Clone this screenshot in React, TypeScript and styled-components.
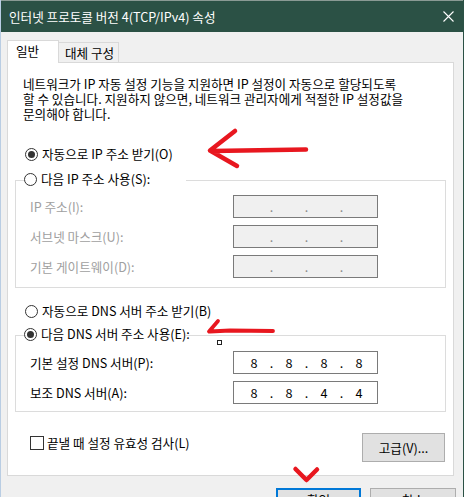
import React from 'react'
import styled, { createGlobalStyle } from 'styled-components'

const GlobalStyle = createGlobalStyle`
    html, body {
        margin: 0;
        padding: 0;
        background: #ffffff;
    }
    body {
        font-family: 'Noto Sans CJK KR', 'Noto Sans', sans-serif;
        font-size: 12.6px;
        color: #000000;
    }
`

// Styled Components
const Window = styled.div`
    position: relative;
    width: 464px;
    height: 497px;
    box-sizing: border-box;
    overflow: hidden;
    background: #f0f0f0;
    border-left: 1px solid #b9cde3;
    border-right: 1px solid #2b5145;
    display: flex;
    flex-direction: column;
`

const TitleBar = styled.div`
    height: 32px;
    flex: none;
    box-sizing: border-box;
    border-top: 1px solid #8a9a94;
    background: #2b5145;
    color: #ffffff;
    display: flex;
    align-items: center;
    justify-content: space-between;
    padding: 0 9px 0 8px;
    line-height: 16px;
`

const Body = styled.div`
    padding: 8px 7px 0 6px;
    display: flex;
    flex-direction: column;
`

const TabBar = styled.div`
    display: flex;
    align-items: flex-end;
    height: 22px;
`

const Tab = styled.div<{ $active?: boolean }>`
    position: relative;
    z-index: ${(p) => (p.$active ? 2 : 1)};
    box-sizing: border-box;
    height: ${(p) => (p.$active ? '23px' : '20px')};
    margin-bottom: ${(p) => (p.$active ? '-1px' : '0')};
    margin-left: ${(p) => (p.$active ? '0' : '-1px')};
    width: ${(p) => (p.$active ? '52px' : '61px')};
    padding-left: ${(p) => (p.$active ? '8px' : '6px')};
    background: ${(p) => (p.$active ? '#ffffff' : '#f0f0f0')};
    border: 1px solid #d9d9d9;
    border-bottom: none;
    line-height: ${(p) => (p.$active ? '20px' : '19px')};
    white-space: nowrap;
`

const Panel = styled.div`
    position: relative;
    z-index: 1;
    box-sizing: border-box;
    width: 447px;
    height: 414px;
    background: #ffffff;
    border: 1px solid #d9d9d9;
    display: flex;
    flex-direction: column;
`

const Description = styled.p`
    margin: 13px 0 0 15px;
    line-height: 15px;
    white-space: nowrap;
`

const RadioRow = styled.label<{ $top?: number; $legend?: boolean }>`
    display: flex;
    align-items: center;
    gap: 4px;
    height: 20px;
    margin-top: ${(p) => p.$top ?? 0}px;
    margin-left: ${(p) => (p.$legend ? '8px' : '17px')};
    padding-right: ${(p) => (p.$legend ? '1px' : '0')};
    width: ${(p) => (p.$legend ? '161px' : 'auto')};
    background: #ffffff;
    white-space: nowrap;
    line-height: 16px;
`

const RadioCircle = styled.span<{ $checked?: boolean }>`
    position: relative;
    flex: none;
    width: 13px;
    height: 13px;
    box-sizing: border-box;
    border: 1px solid #333333;
    border-radius: 50%;
    background: #ffffff;

    &::after {
        content: '';
        display: ${(p) => (p.$checked ? 'block' : 'none')};
        position: absolute;
        left: 2px;
        top: 2px;
        width: 7px;
        height: 7px;
        border-radius: 50%;
        background: #333333;
    }
`

const GroupBox = styled.div<{ $top: number; $fieldTop: number; $bottom: number }>`
    box-sizing: border-box;
    width: 431px;
    margin: ${(p) => p.$top}px 0 0 7px;
    border: 1px solid #dcdcdc;
    padding-bottom: ${(p) => p.$bottom}px;

    & > ${RadioRow} {
        margin-top: -12px;
    }

    & > div:first-of-type {
        margin-top: ${(p) => p.$fieldTop}px;
    }
`

const FieldGrid = styled.div`
    display: grid;
    grid-template-columns: 1fr 145px;
    row-gap: 7px;
    align-items: center;
    padding: 0 67px 0 14px;
`

const FieldLabel = styled.span<{ $disabled?: boolean }>`
    color: ${(p) => (p.$disabled ? '#a0a0a0' : '#000000')};
    white-space: nowrap;
    line-height: 16px;
`

const IpBox = styled.div<{ $disabled?: boolean }>`
    box-sizing: border-box;
    height: 23px;
    display: flex;
    align-items: center;
    padding-left: 5px;
    background: ${(p) => (p.$disabled ? '#f0f0f0' : '#ffffff')};
    border: 1px solid #7a7a7a;
    color: ${(p) => (p.$disabled ? '#8a8a8a' : '#000000')};
    line-height: 16px;
`

const Octet = styled.span`
    width: 30px;
    text-align: center;
`

const Dot = styled.span`
    width: 5px;
    text-align: center;
`

const Footer = styled.div`
    display: flex;
    justify-content: space-between;
    align-items: flex-start;
    margin-top: 21px;
    padding: 0 8px 0 22px;
`

const CheckRow = styled.label`
    display: flex;
    align-items: center;
    gap: 3px;
    margin-top: 3px;
    height: 14px;
    white-space: nowrap;
    line-height: 16px;
`

const CheckBox = styled.span`
    width: 14px;
    height: 14px;
    box-sizing: border-box;
    border: 1px solid #333333;
    background: #ffffff;
`

const Button = styled.div<{ $w: number; $h: number; $default?: boolean }>`
    box-sizing: border-box;
    width: ${(p) => p.$w}px;
    height: ${(p) => p.$h}px;
    flex: none;
    display: flex;
    align-items: center;
    justify-content: center;
    background: #e1e1e1;
    border: ${(p) => (p.$default ? '2px solid #0078d7' : '1px solid #adadad')};
    white-space: nowrap;
    line-height: 16px;
`

const DialogButtons = styled.div`
    display: flex;
    justify-content: flex-end;
    gap: 9px;
    margin-top: 12px;
`

const CursorMark = styled.span`
    position: absolute;
    left: 216px;
    top: 340px;
    width: 5px;
    height: 5px;
    box-sizing: border-box;
    border: 1px solid #222222;
    background: #ffffff;
    z-index: 5;
`

const Overlay = styled.svg`
    position: absolute;
    left: -1px;
    top: 0;
    width: 466px;
    height: 497px;
    pointer-events: none;
    z-index: 10;
`

// SVG Icons
const CloseIcon = () => (
    <svg width="11" height="11" viewBox="0 0 11 11">
        <path d="M0.5 0.5 L10.5 10.5 M10.5 0.5 L0.5 10.5" stroke="#ffffff" strokeWidth="1.1" />
    </svg>
)

const IpField = ({ value, disabled }: { value?: string[]; disabled?: boolean }) => {
    const parts = value ?? ['', '', '', '']
    return (
        <IpBox $disabled={disabled}>
            {parts.map((p, i) => (
                <React.Fragment key={i}>
                    <Octet>{p}</Octet>
                    {i < 3 && <Dot>.</Dot>}
                </React.Fragment>
            ))}
        </IpBox>
    )
}

const App: React.FC = () => {
    return (
        <Window>
            <GlobalStyle />
            <TitleBar>
                <span>인터넷 프로토콜 버전 4(TCP/IPv4) 속성</span>
                <CloseIcon />
            </TitleBar>
            <Body>
                <TabBar>
                    <Tab $active>일반</Tab>
                    <Tab>대체 구성</Tab>
                </TabBar>
                <Panel>
                    <Description>
                        네트워크가 IP 자동 설정 기능을 지원하면 IP 설정이 자동으로 할당되도록
                        <br />
                        할 수 있습니다. 지원하지 않으면, 네트워크 관리자에게 적절한 IP 설정값을
                        <br />
                        문의해야 합니다.
                    </Description>

                    <RadioRow $top={23}>
                        <RadioCircle $checked />
                        자동으로 IP 주소 받기(O)
                    </RadioRow>

                    <GroupBox $top={16} $fieldTop={6} $bottom={9}>
                        <RadioRow $legend>
                            <RadioCircle />
                            다음 IP 주소 사용(S):
                        </RadioRow>
                        <FieldGrid>
                            <FieldLabel $disabled>IP 주소(I):</FieldLabel>
                            <IpField disabled />
                            <FieldLabel $disabled>서브넷 마스크(U):</FieldLabel>
                            <IpField disabled />
                            <FieldLabel $disabled>기본 게이트웨이(D):</FieldLabel>
                            <IpField disabled />
                        </FieldGrid>
                    </GroupBox>

                    <RadioRow $top={13}>
                        <RadioCircle />
                        자동으로 DNS 서버 주소 받기(B)
                    </RadioRow>

                    <GroupBox $top={14} $fieldTop={7} $bottom={7}>
                        <RadioRow $legend>
                            <RadioCircle $checked />
                            다음 DNS 서버 주소 사용(E):
                        </RadioRow>
                        <FieldGrid>
                            <FieldLabel>기본 설정 DNS 서버(P):</FieldLabel>
                            <IpField value={['8', '8', '8', '8']} />
                            <FieldLabel>보조 DNS 서버(A):</FieldLabel>
                            <IpField value={['8', '8', '4', '4']} />
                        </FieldGrid>
                    </GroupBox>

                    <Footer>
                        <CheckRow>
                            <CheckBox />
                            끝낼 때 설정 유효성 검사(L)
                        </CheckRow>
                        <Button $w={83} $h={29}>고급(V)...</Button>
                    </Footer>
                </Panel>

                <DialogButtons>
                    <Button $w={85} $h={23} $default>확인</Button>
                    <Button $w={86} $h={23}>취소</Button>
                </DialogButtons>
            </Body>

            <CursorMark />

            {/* red hand-drawn annotations */}
            <Overlay viewBox="0 0 466 497">
                <g fill="none" stroke="#e8171f" strokeLinecap="round" strokeLinejoin="round">
                    <path d="M306 149.5 L212 151 M235 131 L210 150.5 L237 166" strokeWidth="4.5" />
                    <path d="M273 331 L230 330.5 L210 331.5 M218 321 L209 331.5" strokeWidth="3.8" />
                    <path d="M295.5 469 L306.5 480 L317 469.5" strokeWidth="4.5" />
                </g>
            </Overlay>
        </Window>
    )
}

export default App
